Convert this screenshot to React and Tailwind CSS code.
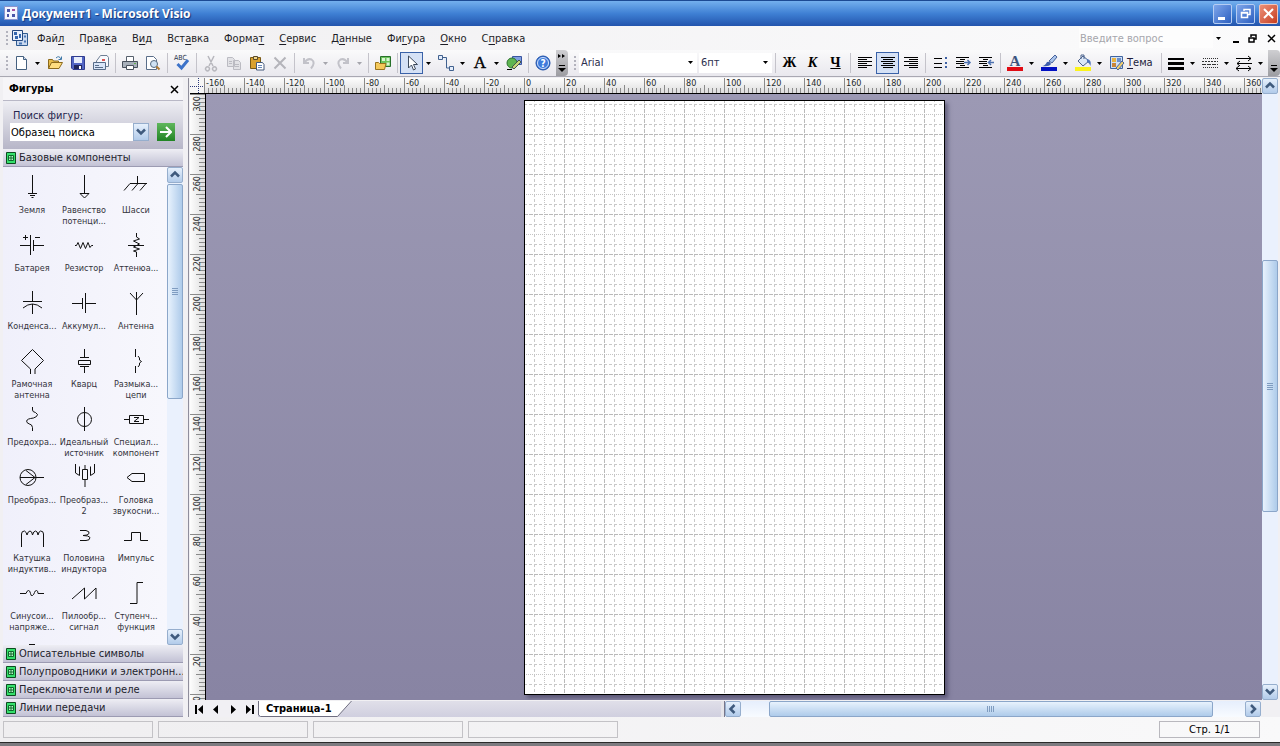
import { useState } from 'react';

const ARROW_BLUE = '#3f5a7d';

const menus = [
  ['Фай', 'л', ''],
  ['Прав', 'к', 'а'],
  ['В', 'и', 'д'],
  ['Вст', 'а', 'вка'],
  ['Форма', 'т', ''],
  ['', 'С', 'ервис'],
  ['Д', 'а', 'нные'],
  ['Фи', 'г', 'ура'],
  ['', 'О', 'кно'],
  ['С', 'п', 'равка'],
];

// 24x24 stencil drawings
const shapes = [
  { label: ['Земля'], draw: <path d="M12.5 0v18M8 18.5h9M10 20.5h5M11.5 22.5h2" /> },
  { label: ['Равенство', 'потенци...'], draw: <path d="M12.5 0v18M8 18.5h9l-4.5 4.5z" /> },
  { label: ['Шасси'], draw: <path d="M13.5 1v7M6 8.5h17M6 8.5l-6 7M14 8.5l-6 7M22 8.5l-6 7" /> },
  { label: ['Батарея'], draw: <path d="M0 12.5h10M10.5 2v20M13.5 7v11M14 12.5h10M3 4.5h5M5.5 2v5M15 4.5h5" /> },
  { label: ['Резистор'], draw: <path d="M3 12.5h1.500l1.500-3 2.500 6 2.500-6 2.500 6 2.500-6 2 5 1.500-2h1.500" /> },
  { label: ['Аттенюа...'], draw: <path d="M12.5 0v4l3 2-6 2 6 3-6 3 6 2-6 2 3 1v5M4 12.5h16" /> },
  { label: ['Конденса...'], draw: <path d="M12.5 0v10M3 10.5h19M3 17q9.500-8 19 0M12.5 13v10" /> },
  { label: ['Аккумул...'], draw: <path d="M0 12.5h10M10.5 7v11M13.5 2v20M14 12.5h10" /> },
  { label: ['Антенна'], draw: <path d="M12.5 1v23M6 2l6.500 7L19 2" /> },
  { label: ['Рамочная', 'антенна'], draw: <path d="M10.5 25v-5L1.500 11.500l11-11 11 11-8.500 8.500v5" /> },
  { label: ['Кварц'], draw: <path d="M12.5 0v8M8 8.5h9M6.5 11.5h12v4h-12zM8 17.500h9M12.5 18v6" /> },
  { label: ['Размыка...', 'цепи'], draw: <path d="M11.5 0v8M14 7l1.500 2v2l2 1.500-2 1.500v2l-1.500 2M11.5 17v7" /> },
  { label: ['Предохра...'], draw: <path d="M12.5 0v3q0 2 3 2.500 3.500 2 1 4-3 2-6 2-5 1-3.500 4 2 1.500 4.500 2.500 1.500 2 1 6" /> },
  { label: ['Идеальный', 'источник'], draw: <><circle cx="12.5" cy="12.5" r="7" /><path d="M12.5 0v24" /></> },
  { label: ['Специал...', 'компонент'], draw: <path d="M0 12.5h5M5.5 8.5h14v8h-14zM20 12.5h5M10 10.5h5l-5 4h5" /> },
  { label: ['Преобраз...'], draw: <><circle cx="8" cy="12.5" r="8" /><path d="M0 12.5h24M15 12.5l-9-7M15 12.5l-9 7" /></> },
  { label: ['Преобраз...', '2'], draw: <path d="M3.5-1v9l4 2.500v-9M22.5-1v9l-4 2.500v-9M10.5 4.500h5v10h-5zM13 0v4M13 15v7" /> },
  { label: ['Головка', 'звукосни...'], draw: <path d="M3 12.5l5-4h12.500v8H8z" /> },
  { label: ['Катушка', 'индуктив...'], draw: <path d="M1.5 24V11q0-3 3-3 2 1 2.500 4 1-4 3-4t2.500 4q1-4 3-4t2.500 4q1-4 2.500-4 3 0 3 3v13" /> },
  { label: ['Половина', 'индуктора'], draw: <path d="M8 7.500h6q4 1 3 3-1 2-6 2 6 0 7 2 0 3-4 3H8" /> },
  { label: ['Импульс'], draw: <path d="M0 17.5h7.500v-8h9v8H24" /> },
  { label: ['Синусои...', 'напряже...'], draw: <path d="M0 12.5h6q1-3 2.500-3t2 3 2 2 2-3 2-2 1.500 3H24" /> },
  { label: ['Пилообр...', 'сигнал'], draw: <path d="M0 18L12.5 7v11L24 7v11" /> },
  { label: ['Ступенч...', 'функция'], draw: <path d="M6 22.5h7v-21h6" /> },
  { label: [], draw: <path d="M9 5.5h6" /> },
];

const stencils = ['Описательные символы', 'Полупроводники и электронн...', 'Переключатели и реле', 'Линии передачи'];

const hMarks = Array.from({ length: 27 }, (_, i) => i * 20 - 160);
const vMarks = Array.from({ length: 16 }, (_, i) => 300 - i * 20);

const alignLines = (x) => (
  <path stroke="#000" d={x.map(([a, w], i) => `M${a} ${i * 2 + 2.5}h${w}`).join('')} />
);

const icons = {
  new: <><path fill="#fff" stroke="#45607f" d="M3.5 1.5h7l3 3v10h-10z" /><path fill="#cfdcf2" stroke="#45607f" d="M10.5 1.5v3h3" /></>,
  open: <><path fill="#e9bd4b" stroke="#8c6a1c" d="M1.5 13.5v-9h4l1 1.500h5v3" /><path fill="#ffdd80" stroke="#8c6a1c" d="M1.5 13.5l3-6h11l-3.500 6z" /><path fill="none" stroke="#3e78a8" d="M9 3q3-3 5 1M14.5 1.500v3h-3" /></>,
  save: <><path fill="#5265c4" stroke="#303c8f" d="M1.5 1.5h13v13H3l-1.500-1.500z" /><path fill="#e7edfb" d="M4 2h8v6H4z" /><path fill="#20265c" d="M4 10h8v4H4z" /><path fill="#fff" d="M9 11h2v3H9z" /></>,
  mail: <><path fill="#f7f9fd" stroke="#6f7f94" d="M3.5 6l4-5.500h6.500l1.500 2v9h-12z" /><path fill="#d9e5f8" stroke="#566b88" d="M.5 7.500h12v7H.5z" /><path fill="none" stroke="#566b88" d="M2 10.5h4M2 12.5h8" /><path fill="#d55" d="M9 4h3v2H9z" /></>,
  print: <><path fill="#fff" stroke="#56606c" d="M4.5 1.5h7v5h-7z" /><path fill="#a8b0ba" stroke="#48515c" d="M.5 6.5h15v6H.5z" /><path fill="#fff" stroke="#48515c" d="M4.5 10.5h7v4h-7z" /><path fill="#5fae4d" d="M12 8h2v1h-2z" /></>,
  preview: <><path fill="#fff" stroke="#5a6e89" d="M1.5 1.5h7l3 3v10h-10z" /><circle cx="9" cy="9" r="3.5" fill="#cfe2f4" stroke="#54697f" /><path stroke="#b07b35" strokeWidth="2" d="M11.5 11.5l3 3" /></>,
  spell: <><text x="0" y="5" fontSize="7" fill="#26314a">ABC</text><path fill="none" stroke="#3d73c9" strokeWidth="3" d="M3.5 9l4 4 6.500-8" /></>,
  cut: <path fill="none" stroke="#b7b7bd" strokeWidth="1.5" d="M5 1l5 10M11 1L6 11M6 12.5a2 2 0 1 1-3 0 2 2 0 0 1 3 0M13 12.5a2 2 0 1 1-3 0 2 2 0 0 1 3 0" />,
  copy: <><path fill="#e2e2e6" stroke="#bbbbc2" d="M1.5 2.500h5l2 2v7h-7zM7.5 5.500h5l2 2v7h-7z" /><path stroke="#bbbbc2" d="M9 9.5h4M9 11.5h4M3 6.500h3M3 8.500h3" /></>,
  paste: <><path fill="#d9a12f" stroke="#7a5a17" d="M1.5 2.5h10v11h-10z" /><path fill="#f1d78c" stroke="#5a4a2a" d="M4.5 1.5h4v3h-4z" /><path fill="#fff" stroke="#44597a" d="M7.5 7.5h6l1.500 2v5.500H7.5z" /><path stroke="#6787b8" d="M9 10.5h4M9 12.5h4" /></>,
  del: <path stroke="#b4b4ba" strokeWidth="2" d="M2.5 2.5l11 11M13.5 2.5l-11 11" />,
  undo: <path fill="none" stroke="#c2c2c9" strokeWidth="2" d="M3 3v5h5M3.5 7.500q3-4.500 7-3 4.500 3-.500 9" />,
  redo: <path fill="none" stroke="#c2c2c9" strokeWidth="2" d="M13 3v5H8M12.5 7.500q-3-4.500-7-3-4.500 3 .500 9" />,
  shapes: <><path fill="#6cc35c" stroke="#27702a" d="M5.5 1.5h10v10h-10z" /><path fill="#d9f5d2" d="M7 3h3v3H7zM11.5 3h3v3h-3zM11.5 7.500h3v3h-3z" /><path fill="#f4c85a" stroke="#98721c" d="M.5 14.5v-7h3l1 1h6.500l-1.500 6z" /></>,
  pointer: <path fill="#fff" stroke="#3d4a5c" d="M4.5 1v12l3-3 2 5 2-1-2-4.500h4z" />,
  connector: <path fill="#e4edfb" stroke="#41618e" d="M.5.5h4v4h-4zM5 2.5h3.500v10.500h3M11.5 11.5h4v4h-4z" />,
  letter: <text x="8" y="13" textAnchor="middle" fontSize="17" className="font-['Liberation_Serif',serif]" stroke="#000" strokeWidth=".4">A</text>,
  style: <><path fill="#7f9fe0" stroke="#3a55a0" d="M6.5 1.5h9v8h-9z" /><circle cx="6" cy="8" r="5" fill="#5fb551" stroke="#2c7330" /><path fill="#c7d377" stroke="#44584b" d="M6 12l7-7 2 2-7 7z" /><path stroke="#000" d="M1 14.5h5" /></>,
  help: <><circle cx="8" cy="8" r="7" fill="#3e7bdc" stroke="#1f4fa5" /><circle cx="8" cy="8" r="5.5" fill="none" stroke="#cfe0fa" /><text x="8" y="12" textAnchor="middle" fontSize="10" fontWeight="700" fill="#fff">?</text></>,
  left: alignLines([[1, 14], [1, 9], [1, 14], [1, 9], [1, 14], [1, 9]]),
  center: alignLines([[1, 14], [3, 10], [1, 14], [3, 10], [1, 14], [3, 10]]),
  right: alignLines([[1, 14], [6, 9], [1, 14], [6, 9], [1, 14], [6, 9]]),
  bullets: <><path stroke="#000" d="M2 3.5h8M2 8.5h8M2 12.5h8" /><path fill="#3f62a5" d="M13 2h2v2h-2zM13 7h2v2h-2zM13 11h2v2h-2z" /></>,
  outdent: <><path stroke="#000" d="M1 2.5h13M5 4.5h5M1 6.5h8M1 8.5h8M5 10.5h5M1 12.5h13" /><path fill="none" stroke="#4d71b0" d="M9 7.5h6M12.5 5l2.500 2.500-2.500 2.500" strokeWidth="1.5" /></>,
  indent: <><path stroke="#000" d="M1 2.5h13M5 4.5h5M1 6.5h8M1 8.5h8M5 10.5h5M1 12.5h13" /><path fill="none" stroke="#4d71b0" d="M10 7.5h6M13 5l-2.500 2.500 2.500 2.500" strokeWidth="1.5" /></>,
  fontColor: <><text x="8" y="11" textAnchor="middle" fontSize="15" fontWeight="700" fill="#3c557f" className="font-['Liberation_Serif',serif]">A</text><path fill="#e00b14" d="M0 12h16v4H0z" /></>,
  lineColor: <><path fill="#a9c4ec" stroke="#47629b" d="M8 6l6-6 2 2-5 6z" /><path fill="#3d5dab" d="M1 11q3 0 5-4 3-1 4 2-2 3-9 2z" /><path fill="#0210c2" d="M0 12h16v4H0z" /></>,
  fill: <><path fill="#dbe7f7" stroke="#4a628c" d="M3 6l5-5 6 5-6 5z" /><path fill="none" stroke="#4a628c" d="M6 4V0h3v4" /><path fill="#4f76bd" d="M12 4q5 1 3.500 7-1-3-3.500-4z" /><path fill="#fbf31c" d="M0 12h16v4H0z" /></>,
  theme: <><path fill="#cfe0f6" stroke="#3f649f" d="M1.5 1.5h12v12h-12z" /><path fill="#e8b23e" d="M3 3h4v4H3z" /><path fill="#6c8fc9" d="M8 3h4v4H8z" /><path fill="#c8853a" d="M3 8h4v4H3z" /><path fill="#f0cf6e" stroke="#47629b" d="M7 13l6-7 2 2-6 7z" /></>,
  weight: <path fill="#000" d="M0 3h16v2H0zM0 7h16v3H0zM0 12h16v3H0z" />,
  pattern: <><path stroke="#333" d="M1 3.5h15M1 12.5h15" strokeDasharray="1 1" /><path stroke="#333" d="M0 6.5h16" strokeDasharray="2 1" /><path stroke="#333" d="M0 9.5h16" strokeDasharray="4 1" /></>,
  ends: <path fill="none" stroke="#000" d="M0 3.5h15M12 1l3 2.500-3 2.500M1 8.5h15M4 6L1 8.5 4 11M0 13.5h15M12 11l3 2.500-3 2.500M3 11l-3 2.500 3 2.500" />,
};

function Tool({ name, label, active, children }) {
  return (
    <button
      aria-label={label}
      className={
        active
          ? 'flex h-[22px] w-[23px] shrink-0 items-center justify-center border border-[#3a62a8] bg-[#d5e1f5]'
          : 'flex h-[22px] w-[23px] shrink-0 items-center justify-center'
      }
    >
      {children || <svg width="16" height="16" viewBox="0 0 16 16" className="overflow-visible">{icons[name]}</svg>}
    </button>
  );
}

function Drop({ dim }) {
  return (
    <button aria-label="Ещё" className="flex h-[22px] w-[11px] shrink-0 items-center justify-center">
      <svg width="5" height="3"><path d="M0 0h5L2.5 3z" fill={dim ? '#a5a5ac' : '#000'} /></svg>
    </button>
  );
}

const Sep = () => (
  <div className="flex w-[6px] shrink-0 justify-center"><div className="h-5 w-px bg-[#c4c3ca]" /></div>
);

const Grip = () => (
  <div className="flex w-[3px] shrink-0 flex-col gap-[2px]">
    {[0, 1, 2, 3].map((i) => <div key={i} className="size-[2px] bg-[#b3b3bd]" />)}
  </div>
);

function Overflow({ more }) {
  return (
    <button aria-label="Другие кнопки" className="flex h-[26px] w-3 shrink-0 flex-col items-center justify-between rounded-r bg-gradient-to-b from-[#cfcfd2] to-[#9d9da2] py-1">
      <svg width="8" height="4">{more && <path d="M0 0l3 2-3 2zM4 0l3 2-3 2z" />}</svg>
      <svg width="8" height="7"><path d="M1 0h6v1H1zM0 3h8L4 7z" /></svg>
    </button>
  );
}

function Select({ label, value, width }) {
  return (
    <div className="relative shrink-0">
      <select aria-label={label} defaultValue={value} className={`${width} h-5 appearance-none bg-white pl-[2px] text-[#2b2f4e] outline-none`}>
        <option>{value}</option>
      </select>
      <svg width="5" height="3" className="pointer-events-none absolute top-2 right-1"><path d="M0 0h5L2.5 3z" /></svg>
    </div>
  );
}

const chevrons = {
  up: 'M4 9.5l4-4 4 4',
  down: 'M4 5.5l4 4 4-4',
  left: 'M9.5 4l-4 4 4 4',
  right: 'M6 4l4 4-4 4',
};

function ScrollButton({ dir }) {
  return (
    <button aria-label={dir} className="flex size-4 shrink-0 items-center justify-center rounded-xs border border-[#96aecd] bg-gradient-to-b from-[#e6f0fc] to-[#b2cbea]">
      <svg width="16" height="16" className="shrink-0"><path d={chevrons[dir]} fill="none" stroke={ARROW_BLUE} strokeWidth="2.5" /></svg>
    </button>
  );
}

function ScrollBar({ vertical, before, size, after }) {
  return (
    <div className={vertical ? 'flex w-4 shrink-0 flex-col bg-[#eaf1fd]' : 'flex h-4 min-w-0 flex-1 bg-gradient-to-b from-[#e6eefc] to-[#f8fbff]'}>
      <ScrollButton dir={vertical ? 'up' : 'left'} />
      <div style={{ flexGrow: before }} />
      <div
        className={
          vertical
            ? 'flex basis-0 flex-col items-center justify-center gap-px rounded-xs border border-[#8ba6c9] bg-gradient-to-r from-[#e8f2fd] to-[#aecbea]'
            : 'flex basis-0 items-center justify-center gap-px rounded-xs border border-[#8ba6c9] bg-gradient-to-b from-[#e8f2fd] to-[#aecbea]'
        }
        style={{ flexGrow: size }}
      >
        {[0, 1, 2, 3].map((i) => <div key={i} className={vertical ? 'h-px w-[6px] bg-[#7f9cc0]' : 'h-[6px] w-px bg-[#7f9cc0]'} />)}
      </div>
      <div style={{ flexGrow: after }} />
      <ScrollButton dir={vertical ? 'down' : 'right'} />
    </div>
  );
}

function StencilHeader({ title }) {
  return (
    <button className="flex h-[18px] w-full shrink-0 items-center gap-[3px] overflow-hidden border-b border-[#9c9bb2] bg-gradient-to-b from-[#eeeef4] to-[#c3c2d5] pl-[3px] whitespace-nowrap text-[#22222c]">
      <svg width="10" height="12" className="shrink-0">
        <path d="M.5.5h9v11h-9z" fill="#35e06c" stroke="#0c4d20" />
        <path d="M2.5 3.5h5v5h-5zM5 3v6M2 6h6" fill="#b9f7c8" stroke="#0c6a2a" />
      </svg>
      {title}
    </button>
  );
}

function Shapes() {
  return (
    <aside className="flex w-[180px] shrink-0 flex-col">
      <div className="flex h-[23px] shrink-0 items-center justify-between border-b border-[#b9b8c6] bg-[#f6f5f8] pr-1 pl-[6px]">
        <h2 className="font-bold">Фигуры</h2>
        <button aria-label="Закрыть">
          <svg width="9" height="9"><path d="M1 1l7 7M8 1L1 8" stroke="#000" strokeWidth="1.5" /></svg>
        </button>
      </div>
      <div className="flex h-12 shrink-0 flex-col bg-gradient-to-b from-[#eeeef3] to-[#b7b6c8] pt-2 pl-[7px]">
        <label htmlFor="find" className="pl-[3px] leading-[14px] text-[#26264e]">Поиск фигур:</label>
        <div className="flex items-center">
          <input id="find" defaultValue="Образец поиска" className="h-[18px] w-[123px] bg-white pl-px outline-none" />
          <button aria-label="Список" className="flex h-[18px] w-4 items-center justify-center border border-[#96aecd] bg-gradient-to-b from-[#e6f0fc] to-[#b2cbea]">
            <svg width="16" height="16" className="shrink-0"><path d={chevrons.down} fill="none" stroke={ARROW_BLUE} strokeWidth="2.5" /></svg>
          </button>
          <button aria-label="Найти" className="ml-2 flex size-[18px] items-center justify-center bg-gradient-to-b from-[#5fb75c] to-[#1f8423]">
            <svg width="12" height="12"><path d="M0 6h10M6 1l5 5-5 5" fill="none" stroke="#fff" strokeWidth="2" /></svg>
          </button>
        </div>
      </div>
      <StencilHeader title="Базовые компоненты" />
      <div className="flex min-h-0 flex-1 bg-gradient-to-r from-[#f0f0fb] to-[#f8f8fd]">
        <div className="grid min-w-0 flex-1 auto-rows-[58px] grid-cols-[repeat(3,52px)] overflow-hidden pt-2 pl-[3px]">
          {shapes.map((s, i) => (
            <button key={i} className="flex flex-col items-center text-[9px] leading-[11px] whitespace-nowrap text-[#33333b]">
              <svg width="25" height="30" viewBox="0 0 25 30" fill="none" stroke="#111" className="shrink-0 overflow-visible">{s.draw}</svg>
              {s.label.map((l) => <span key={l}>{l}</span>)}
            </button>
          ))}
        </div>
        <ScrollBar vertical before={1} size={213} after={231} />
      </div>
      {stencils.map((s) => <StencilHeader key={s} title={s} />)}
    </aside>
  );
}

const hTicks = Array.from({ length: 9 }, (_, i) => `M${(i + 1) * 4 + 0.5} ${i === 4 ? 7 : 10}V15`).join('') + 'M.5 0V15';
const vTicks = Array.from({ length: 9 }, (_, i) => `M${i === 4 ? 6 : 9} ${(i + 1) * 4 + 0.5}H15`).join('') + 'M0 .5H15';

function HRuler() {
  return (
    <div className="flex h-4 overflow-hidden border-b border-black bg-gradient-to-b from-[#fdfdfd] to-[#dedede]">
      {hMarks.map((n) => (
        <div key={n} className="relative h-4 w-10 shrink-0">
          <svg width="40" height="15" className="absolute"><path d={hTicks} stroke="#8a8a8a" /></svg>
          <span className="relative block pl-[2px] text-[9px] leading-[10px] text-[#1f2b2b]">{n}</span>
        </div>
      ))}
    </div>
  );
}

function VRuler() {
  return (
    <div className="flex min-h-0 w-4 shrink-0 flex-col overflow-hidden border-r border-black bg-gradient-to-r from-[#fdfdfd] to-[#dedede]">
      {vMarks.map((n) => (
        <div key={n} className="relative h-10 w-4 shrink-0">
          <svg width="15" height="40" className="absolute"><path d={vTicks} stroke="#8a8a8a" /></svg>
          <span className="absolute top-[2px] left-[2px] rotate-180 text-[9px] leading-[10px] text-[#1f2b2b] [writing-mode:vertical-rl]">{n}</span>
        </div>
      ))}
    </div>
  );
}

// A4 page, 2px per millimetre
function Page() {
  return (
    <div className="h-[595px] w-[421px] shrink-0 border border-black bg-white shadow-[3px_3px_4px_rgba(50,45,75,0.5)]">
      <svg width="100%" height="100%" className="block">
        <defs>
          <pattern id="grid" x="-1" y="-7" width="40" height="40" patternUnits="userSpaceOnUse">
            <g stroke="#c9c9c9" strokeDasharray="3 2">
              <path d="M10.5 0V40" /><path d="M30.5 0V40" /><path d="M0 10.5H40" /><path d="M0 30.5H40" />
            </g>
            <g stroke="#c4c4c4" strokeDasharray="1 1">
              <path d="M20.5 0V40" /><path d="M0 20.5H40" />
            </g>
            <g stroke="#bababa" strokeDasharray="4 1">
              <path d="M.5 0V40" /><path d="M0 .5H40" />
            </g>
          </pattern>
        </defs>
        <rect width="100%" height="100%" fill="url(#grid)" />
      </svg>
    </div>
  );
}

const navArrows = [
  ['Первая', 'M1 0h2v9H1zM9 0v9L4 4.5z'],
  ['Назад', 'M7 0v9L2 4.5z'],
  ['Вперёд', 'M3 0v9l5-4.500z'],
  ['Последняя', 'M1 0v9l5-4.500zM7 0h2v9H7z'],
];

function Drawing() {
  return (
    <main className="flex min-w-0 flex-1 flex-col">
      <div className="flex min-h-0 flex-1">
        <div className="flex min-w-0 flex-1 flex-col">
          <div className="flex shrink-0">
            <svg width="14" height="16" className="shrink-0 bg-[#f6f6f6]">
              <path d="M0 8.5h14M8.5 0v15" stroke="#2b3a7a" strokeDasharray="1 1" />
              <path d="M0 15.5h14" stroke="#000" />
            </svg>
            <div className="min-w-0 flex-1"><HRuler /></div>
          </div>
          <div className="flex min-h-0 flex-1">
            <VRuler />
            <div className="flex min-w-0 flex-1 justify-center overflow-hidden bg-gradient-to-b from-[#9c99b4] to-[#8884a3] pt-[6px]">
              <Page />
            </div>
          </div>
        </div>
        <ScrollBar vertical before={166} size={250} after={172} />
      </div>
      <div className="flex h-[17px] shrink-0 pt-px">
        <div className="flex min-w-0 flex-[530] bg-gradient-to-b from-[#e0dfe9] to-[#d0cfdf]">
          <div className="flex items-center bg-[#f1f0f4]">
            {navArrows.map(([label, d]) => (
              <button key={label} aria-label={label} className="flex w-[17px] justify-center">
                <svg width="10" height="9"><path d={d} /></svg>
              </button>
            ))}
          </div>
          <button className="relative h-4 w-[94px] shrink-0 pl-2 text-left leading-4 font-bold">
            <svg width="94" height="16" className="absolute top-0 left-0"><path d="M.5 0v14l2 1.500h77L93.5 0" fill="#fff" stroke="#6f6e80" /></svg>
            <span className="relative">Страница-1</span>
          </button>
        </div>
        <div className="w-1 shrink-0 border-r border-[#77768a] bg-[#e6e5ea]" />
        <div className="flex flex-[536]"><ScrollBar before={28} size={442} after={32} /></div>
        <div className="w-[17px] shrink-0 bg-[#f1f0f3]" />
      </div>
    </main>
  );
}

export default function App() {
  const [question, setQuestion] = useState('');

  return (
    <div className="flex h-screen flex-col overflow-hidden bg-[#f1f0f3] font-['DejaVu_Sans_Condensed','Noto_Sans',sans-serif] text-[11px] leading-[14px] text-black">
      <header className="flex h-[26px] shrink-0 items-center border-t border-[#1c4a94] bg-gradient-to-b from-[#74b0ee] via-[#3f80d4] to-[#2354ad] pr-[2px] pl-[3px]">
        <svg width="15" height="15" className="mr-1 shrink-0">
          <path d="M1.5.5h13v13h-13z" fill="#f4f5ff" stroke="#8b93cc" />
          <path d="M4 3h3v3H4zM9 8h3v3H9zM4 8h2v3H4z" fill="#4b55a8" />
          <path d="M9 3h3v2H9z" fill="#a44d9d" />
        </svg>
        <h1 className="font-['Open_Sans',sans-serif] text-[12px] font-bold text-white [text-shadow:1px_1px_1px_#12357c]">Документ1 - Microsoft Visio</h1>
        <div className="ml-auto flex gap-1">
          <button aria-label="Свернуть" className="flex h-5 w-[19px] items-end rounded-xs border border-[#b5cdf3] bg-gradient-to-br from-[#7fa6ea] to-[#2c5fc0] pb-[3px] pl-1">
            <span className="h-[3px] w-[7px] bg-white" />
          </button>
          <button aria-label="Восстановить" className="flex h-5 w-[19px] items-center justify-center rounded-xs border border-[#b5cdf3] bg-gradient-to-br from-[#7fa6ea] to-[#2c5fc0]">
            <svg width="11" height="11"><path d="M4 3V1.5h6v5H8M1.5 4.5h6v5h-6zM1 5h7" fill="none" stroke="#fff" strokeWidth="1.5" /></svg>
          </button>
          <button aria-label="Закрыть" className="flex h-5 w-[19px] items-center justify-center rounded-xs border border-[#f2c4b8] bg-gradient-to-br from-[#ec9078] to-[#c63b1d]">
            <svg width="11" height="11"><path d="M1 1l9 9M10 1l-9 9" stroke="#fff" strokeWidth="2" /></svg>
          </button>
        </div>
      </header>

      <nav className="flex h-6 shrink-0 items-center bg-gradient-to-r from-[#f0eff1] to-[#fbfbfc] pl-[6px]">
        <Grip />
        <svg width="17" height="17" className="mx-[2px] shrink-0">
          <path d="M5.5 3.5h11v12h-11z" fill="#c9d8ef" stroke="#2e5a90" />
          <path d="M13 5.500h2v2h-2zM13 10.5h2v2h-2zM8 12.500h3v2H8z" fill="#4a76b5" />
          <path d="M1.5.5h10v10h-10z" fill="#e8f0fc" stroke="#24487f" />
          <path d="M3 2h3v3H3zM8 4h2v4H8zM4 6h3v3H4z" fill="#3566ad" />
        </svg>
        <div className="ml-[7px] flex gap-[15px] pt-px">
          {menus.map(([a, b, c]) => (
            <button key={a + b + c} className="text-[#1d1d26]">
              {a}<u className="underline-offset-2">{b}</u>{c}
            </button>
          ))}
        </div>
        <input
          aria-label="Введите вопрос"
          placeholder="Введите вопрос"
          value={question}
          onChange={(e) => setQuestion(e.target.value)}
          className="ml-auto h-5 w-[134px] bg-white/60 pl-px outline-none placeholder:text-[#a6a6ac]"
        />
        <Drop />
        <div className="mr-1 ml-2 flex items-center gap-2">
          <button aria-label="Свернуть документ"><svg width="8" height="9" className="block"><path d="M1 7h6v2H1z" /></svg></button>
          <button aria-label="Восстановить документ"><svg width="9" height="9" className="block"><path d="M3 3V1h5v4H6M1 4h5v4H1z" fill="none" stroke="#000" strokeWidth="1.5" /></svg></button>
          <button aria-label="Закрыть документ" className="ml-[2px]"><svg width="9" height="9" className="block"><path d="M1 1l7 7M8 1L1 8" stroke="#000" strokeWidth="1.5" /></svg></button>
        </div>
      </nav>

      <div className="flex h-[26px] shrink-0 items-center bg-gradient-to-b from-[#fafafb] to-[#e9e8ee] pl-[6px]">
        <Grip />
        <Tool name="new" label="Создать" /><Drop />
        <Tool name="open" label="Открыть" />
        <Tool name="save" label="Сохранить" />
        <Tool name="mail" label="Сообщение" />
        <Sep />
        <Tool name="print" label="Печать" />
        <Tool name="preview" label="Просмотр" />
        <Sep />
        <Tool name="spell" label="Орфография" />
        <Sep />
        <Tool name="cut" label="Вырезать" />
        <Tool name="copy" label="Копировать" />
        <Tool name="paste" label="Вставить" />
        <Tool name="del" label="Удалить" />
        <Sep />
        <Tool name="undo" label="Отменить" /><Drop dim />
        <Tool name="redo" label="Вернуть" /><Drop dim />
        <Sep />
        <Tool name="shapes" label="Фигуры" />
        <Sep />
        <Tool name="pointer" label="Указатель" active /><Drop />
        <Tool name="connector" label="Соединение" /><Drop />
        <Tool name="letter" label="Текст" /><Drop />
        <Tool name="style" label="Рисование" />
        <Sep />
        <Tool name="help" label="Справка" />
        <div className="mr-[6px] ml-[2px]"><Overflow more /></div>
        <Grip />
        <div className="ml-[2px] flex shrink-0 gap-[2px]">
          <Select label="Шрифт" value="Arial" width="w-[118px]" />
          <Select label="Размер шрифта" value="6пт" width="w-[73px]" />
        </div>
        <Sep />
        <Tool label="Полужирный"><b className="font-['Liberation_Serif',serif] text-[14px]">Ж</b></Tool>
        <Tool label="Курсив"><b className="font-['Liberation_Serif',serif] text-[14px] italic">К</b></Tool>
        <Tool label="Подчёркнутый"><b className="font-['Liberation_Serif',serif] text-[14px] underline">Ч</b></Tool>
        <Sep />
        <Tool name="left" label="По левому краю" />
        <Tool name="center" label="По центру" active />
        <Tool name="right" label="По правому краю" />
        <Sep />
        <Tool name="bullets" label="Маркеры" />
        <Tool name="outdent" label="Уменьшить отступ" />
        <Tool name="indent" label="Увеличить отступ" />
        <Sep />
        <Tool name="fontColor" label="Цвет текста" /><Drop />
        <Tool name="lineColor" label="Цвет линии" /><Drop />
        <Tool name="fill" label="Цвет заливки" /><Drop />
        <button className="flex w-[53px] shrink-0 items-center gap-[2px] pl-1 text-[#1d1d3c]">
          <svg width="16" height="16" className="shrink-0">{icons.theme}</svg>
          <span><u className="underline-offset-2">Т</u>ема</span>
        </button>
        <Sep />
        <Tool name="weight" label="Толщина линии" /><Drop />
        <Tool name="pattern" label="Тип линии" /><Drop />
        <Tool name="ends" label="Концы линии" /><Drop />
        <div className="ml-auto"><Overflow /></div>
      </div>

      <div className="flex min-h-0 flex-1 border-t border-[#a9a8b2] pt-px pr-[2px] pl-[3px]">
        <Shapes />
        <div className="mr-px ml-[5px] w-px shrink-0 bg-[#8f8e9c]" />
        <Drawing />
      </div>

      <footer className="flex h-[25px] shrink-0 items-center gap-[5px] bg-gradient-to-r from-[#efeef0] to-[#f9f9fa] pr-5 pl-[3px]">
        {[0, 1, 2, 3].map((i) => <div key={i} className="h-[17px] w-[150px] border border-[#c3c2c6]" />)}
        <div className="ml-auto h-[17px] w-[101px] border border-[#b9b8be] text-center leading-[16px]">Стр. 1/1</div>
      </footer>
      <div className="h-[4px] shrink-0 border-t border-[#2a2a2a] bg-[#7d7b80]" />
    </div>
  );
}
